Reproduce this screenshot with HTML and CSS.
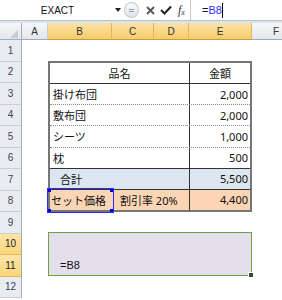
FILE: index.html
```html
<!DOCTYPE html>
<html lang="ja">
  <head>
    <meta charset="UTF-8" />
    <title>EXACT</title>
    <link rel="stylesheet" href="styles.css">
  </head>
  <body>
    <div class="formula-bar">
      <div class="name-box">
        <span class="name">EXACT</span>
        <span class="arrow"></span>
      </div>
      <div class="grip"><span></span></div>
      <div class="tools">
        <svg class="ico-x" width="9" height="9" viewBox="0 0 9 9">
          <path d="M1 1 L8 8 M8 1 L1 8" stroke="#555" stroke-width="1.8" />
        </svg>
        <svg class="ico-ok" width="12" height="10" viewBox="0 0 12 10">
          <path d="M1 5 L4.5 8.5 L11 1.5" stroke="#222" stroke-width="2" fill="none" />
        </svg>
        <i class="fx">f<sub>x</sub></i>
      </div>
      <div class="formula-input">=<span class="ref">B8</span><span class="caret"></span></div>
    </div>
    <div class="band"></div>

    <div class="col-heads">
      <div class="corner">
        <svg width="22" height="17" viewBox="0 0 22 17">
          <polygon points="18,7 18,15 10,15" fill="#c7ccd3" />
        </svg>
      </div>
      <div class="ch col-a">A</div>
      <div class="ch col-b sel">B</div>
      <div class="ch col-c sel">C</div>
      <div class="ch col-d sel">D</div>
      <div class="ch col-e sel">E</div>
      <div class="ch col-f">F</div>
    </div>

    <div class="sheet">
      <div class="row-heads">
        <div class="rh">1</div>
        <div class="rh">2</div>
        <div class="rh">3</div>
        <div class="rh">4</div>
        <div class="rh">5</div>
        <div class="rh">6</div>
        <div class="rh">7</div>
        <div class="rh">8</div>
        <div class="rh">9</div>
        <div class="rh sel">10</div>
        <div class="rh sel">11</div>
        <div class="rh">12</div>
      </div>

      <div class="cells">
        <div class="price-table">
          <div class="tr head">
            <div class="td name center">品名</div>
            <div class="td val center">金額</div>
          </div>
          <div class="tr dotted">
            <div class="td name">掛け布団</div>
            <div class="td val">2,000</div>
          </div>
          <div class="tr dotted">
            <div class="td name">敷布団</div>
            <div class="td val">2,000</div>
          </div>
          <div class="tr dotted">
            <div class="td name">シーツ</div>
            <div class="td val">1,000</div>
          </div>
          <div class="tr solid">
            <div class="td name">枕</div>
            <div class="td val">500</div>
          </div>
          <div class="tr total">
            <div class="td name indent">合計</div>
            <div class="td val">5,500</div>
          </div>
          <div class="tr set">
            <div class="td set-name">セット価格</div>
            <div class="td rate">割引率 20%</div>
            <div class="td val">4,400</div>
          </div>
        </div>

        <div class="merged">=B8</div>
      </div>
    </div>
  </body>
</html>
```

FILE: styles.css
```css
body {
  margin: 0;
  width: 282px;
  height: 300px;
  overflow: hidden;
  background-color: #fff;
  font-family: "Noto Sans", "Noto Sans CJK JP", sans-serif;
  font-size: 11px;
  color: #111;
}

* {
  box-sizing: border-box;
}

/* formula bar */
.formula-bar {
  display: flex;
  height: 21px;
  border-bottom: 1px solid #b8c1cc;
}

.name-box {
  width: 124px;
  display: flex;
  align-items: center;
  font-family: "Liberation Sans", sans-serif;
  font-size: 10px;
}

.name-box .name {
  width: 112px;
  text-align: center;
}

.arrow {
  margin-left: 3px;
  border-top: 4px solid #222;
  border-left: 3px solid transparent;
  border-right: 3px solid transparent;
}

.grip {
  width: 15px;
  height: 16px;
  margin-top: 2px;
  border: 1px solid #c3c8cf;
  border-radius: 50%;
  background: linear-gradient(#fafbfc, #dfe3e8);
  display: flex;
  align-items: center;
  justify-content: center;
}

.grip span {
  width: 5px;
  height: 3px;
  border-top: 1px solid #9aa2ad;
  border-bottom: 1px solid #9aa2ad;
}

.tools {
  width: 51px;
  display: flex;
  align-items: center;
  padding-left: 7px;
  gap: 5px;
}

.fx {
  font-family: "Liberation Serif", serif;
  font-size: 12px;
  color: #333;
  margin-left: 1px;
}

.fx sub {
  font-size: 8px;
  vertical-align: -1px;
}

.formula-input {
  flex: 1;
  display: flex;
  align-items: center;
  padding-left: 11px;
  border-left: 1px solid #c6ccd4;
  font-family: "Liberation Sans", sans-serif;
  font-size: 11px;
}

.ref {
  color: #3030ff;
}

.caret {
  width: 1px;
  height: 15px;
  background-color: #000;
}

.band {
  height: 2px;
  background-color: #dfe4ea;
}

/* column headers */
.col-heads {
  display: flex;
  height: 17px;
  font-family: "Liberation Sans", sans-serif;
  font-size: 10px;
  color: #333;
}

.corner {
  width: 22px;
  background: linear-gradient(#f4f6f8, #e4e8ed);
  border-right: 1px solid #9eabba;
  border-bottom: 1px solid #9eabba;
}

.corner svg {
  display: block;
}

.ch {
  display: flex;
  align-items: center;
  justify-content: center;
  background: linear-gradient(#f6f7f9, #e3e7ec);
  border-right: 1px solid #c5ccd5;
  border-bottom: 1px solid #9eabba;
}

.ch.sel {
  background: linear-gradient(#fbe3a8, #f6cc6a);
  border-right: 1px solid #e3b45c;
  border-bottom: 1px solid #c99b41;
}

.col-a { width: 26px; }
.col-b { width: 64px; }
.col-c { width: 42px; }
.col-d { width: 35px; }
.col-e { width: 63px; }
.col-f {
  width: 30px;
  justify-content: flex-start;
  padding-left: 21px;
  border-right: none;
}

/* sheet */
.sheet {
  display: flex;
}

.row-heads {
  width: 22px;
}

.rh {
  height: 21.5px;
  display: flex;
  align-items: center;
  justify-content: center;
  background-color: #e8ecf1;
  border-right: 1px solid #9eabba;
  border-bottom: 1px solid #c8ced7;
  font-family: "Liberation Sans", sans-serif;
  font-size: 10px;
  color: #3c4450;
}

.rh.sel {
  background: linear-gradient(#fde5aa, #f9d576);
  border-bottom: 1px solid #e6b65b;
  color: #222;
}

.cells {
  padding-left: 26px;
  padding-top: 21px;
}

.price-table {
  width: 204px;
  height: 151px;
  border: 2px solid #767676;
  display: flex;
  flex-direction: column;
}

.tr {
  flex: 1;
  display: flex;
}

.tr.head,
.tr.solid,
.tr.total {
  border-bottom: 1px solid #333;
}

.tr.dotted {
  border-bottom: 1px dotted #8a8a8a;
}

.td {
  display: flex;
  align-items: center;
  white-space: nowrap;
}

.name {
  width: 139px;
  padding-left: 3px;
}

.val {
  flex: 1;
  justify-content: flex-end;
  padding-right: 2px;
  border-left: 1px solid #333;
}

.center {
  justify-content: center;
  padding: 0;
}

.indent {
  padding-left: 10px;
}

.total {
  background-color: #dce6f1;
}

.set {
  background-color: #fcd5b4;
}

.set-name {
  width: 62px;
  padding-left: 1px;
  position: relative;
}

/* reference highlight round B8 */
.set-name::before {
  content: "";
  position: absolute;
  top: -2px;
  left: -3px;
  right: -2px;
  bottom: -3px;
  border: 1.5px solid #2a2aff;
  background:
    linear-gradient(#0000e0, #0000e0) 0 0 / 4px 4px no-repeat border-box,
    linear-gradient(#0000e0, #0000e0) 100% 0 / 4px 4px no-repeat border-box,
    linear-gradient(#0000e0, #0000e0) 0 100% / 4px 4px no-repeat border-box,
    linear-gradient(#0000e0, #0000e0) 100% 100% / 4px 4px no-repeat border-box;
}

.rate {
  width: 77px;
  padding-left: 8px;
}

.merged {
  position: relative;
  width: 204px;
  height: 44px;
  margin-top: 20px;
  padding: 0 0 4px 11px;
  display: flex;
  align-items: flex-end;
  background-color: #e4dfec;
  border: 1.5px solid #73a044;
  font-family: "Liberation Sans", sans-serif;
  font-size: 11px;
}

/* fill handle */
.merged::after {
  content: "";
  position: absolute;
  right: -3px;
  bottom: -3px;
  width: 4px;
  height: 4px;
  background-color: #3b4a2c;
  border: 1px solid #fff;
}
```
